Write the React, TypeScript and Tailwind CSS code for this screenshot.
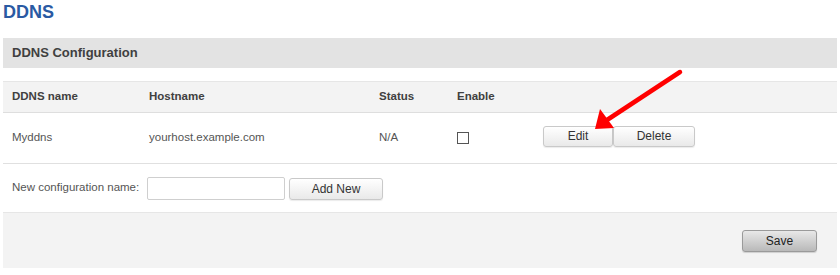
import React from "react";

const btn =
  "h-[21px] rounded-[3px] border border-[#c9c9c9] bg-gradient-to-b from-[#ffffff] to-[#e9e9e9] text-[12px] text-[#333] shadow-[0_1px_1px_rgba(0,0,0,0.08)]";

const App = () => {
  return (
    <div className="relative w-[840px] h-[275px] bg-white font-['Liberation_Sans',Arial,sans-serif] text-[11.5px] text-[#555]">
      <div className="px-[3px] pt-[2px]">
        <h1 className="h-[36px] text-[18px] font-bold leading-[20px] text-[#2a5aa3]">DDNS</h1>

        <div className="h-[30px] bg-[#e3e3e3] pl-[9px] flex items-center text-[13px] font-bold text-[#404040]">
          DDNS Configuration
        </div>

        <div className="mt-[13px]">
          <div className="h-[32px] bg-[#f3f3f3] border-t border-[#e6e6e6] border-b border-b-[#dedede] grid grid-cols-[137px_230px_78px_86px_1fr] items-center pl-[9px] font-bold text-[#404040]">
            <span>DDNS name</span>
            <span>Hostname</span>
            <span>Status</span>
            <span>Enable</span>
            <span />
          </div>
          <div className="h-[51px] border-b border-[#e0e0e0] grid grid-cols-[137px_230px_78px_86px_1fr] items-center pl-[9px]">
            <span>Myddns</span>
            <span>yourhost.example.com</span>
            <span>N/A</span>
            <span>
              <span className="block w-[12px] h-[12px] border border-[#555] bg-white" />
            </span>
            <div className="flex mb-[4px]">
              <button className={`${btn} w-[70px]`}>Edit</button>
              <button className={`${btn} w-[82px]`}>Delete</button>
            </div>
          </div>
          <div className="h-[48px] flex items-center pl-[9px]">
            <span className="w-[135px]">New configuration name:</span>
            <input className="w-[138px] h-[23px] border border-[#cfcfcf] rounded-[2px] bg-white" />
            <button className={`${btn} w-[94px] ml-[4px] h-[22px] mt-[2px]`}>Add New</button>
          </div>
        </div>

        <div className="h-[56px] bg-[#f3f3f3] border-t border-[#e6e6e6] flex items-center justify-end pr-[20px]">
          <button className="w-[75px] h-[22px] rounded-[3px] border border-[#9a9a9a] bg-gradient-to-b from-[#e8e8e8] to-[#b9b9b9] text-[12px] text-[#222] shadow-[0_1px_1px_rgba(0,0,0,0.15)]">
            Save
          </button>
        </div>
      </div>

      <svg className="absolute left-0 top-0 pointer-events-none" width="840" height="275">
        <line x1="680" y1="72" x2="607" y2="120" stroke="#ff0000" strokeWidth="4.5" strokeLinecap="round" />
        <polygon points="595,129 600,109 614,128" fill="#ff0000" />
      </svg>
    </div>
  );
};

export default App;
